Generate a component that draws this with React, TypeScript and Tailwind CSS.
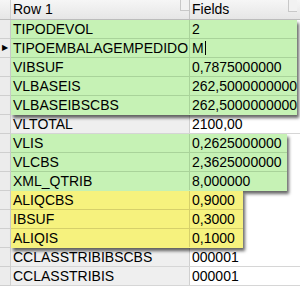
import React from 'react';

type Row = { name: string; value: string; cursor?: boolean; mark?: boolean };

const groups: { tone?: 'green' | 'yellow'; width?: string; rows: Row[] }[] = [
  {
    tone: 'green',
    width: 'w-[286px]',
    rows: [
      { name: 'TIPODEVOL', value: '2' },
      { name: 'TIPOEMBALAGEMPEDIDO', value: 'M', cursor: true, mark: true },
      { name: 'VIBSUF', value: '0,7875000000' },
      { name: 'VLBASEIS', value: '262,5000000000' },
      { name: 'VLBASEIBSCBS', value: '262,5000000000' },
    ],
  },
  { rows: [{ name: 'VLTOTAL', value: '2100,00' }] },
  {
    tone: 'green',
    width: 'w-[276px]',
    rows: [
      { name: 'VLIS', value: '0,2625000000' },
      { name: 'VLCBS', value: '2,3625000000' },
      { name: 'XML_QTRIB', value: '8,000000' },
    ],
  },
  {
    tone: 'yellow',
    width: 'w-[232px]',
    rows: [
      { name: 'ALIQCBS', value: '0,9000' },
      { name: 'IBSUF', value: '0,3000' },
      { name: 'ALIQIS', value: '0,1000' },
    ],
  },
  {
    rows: [
      { name: 'CCLASSTRIBIBSCBS', value: '000001' },
      { name: 'CCLASSTRIBIS', value: '000001' },
    ],
  },
];

function RowHeader({ mark }: { mark?: boolean }) {
  return (
    <div className="h-[19px] w-[11px] shrink-0 border-b border-r border-[#cfcfcf] bg-[#ececec] flex items-center">
      {mark && <span className="ml-[2px] text-[8px] leading-none text-black">▶</span>}
    </div>
  );
}

function Value({ row }: { row: Row }) {
  return (
    <span className="flex items-center">
      {row.value}
      {row.cursor && <span className="ml-[1px] inline-block h-[14px] w-[1px] bg-black" />}
    </span>
  );
}

export default function App() {
  return (
    <div className="w-[300px] h-[287px] overflow-hidden bg-white text-[14px] text-black [font-family:'Liberation_Sans',Arial,sans-serif]">
      {/* column header */}
      <div className="flex h-[20px] border-b border-[#bdbdbd] bg-gradient-to-b from-[#f6f6f6] to-[#e6e6e6]">
        <div className="w-[11px] shrink-0 border-r border-[#cfcfcf]" />
        <div className="relative w-[179px] shrink-0 border-r border-[#c4c4c4] pl-[2px] flex items-center">
          Row 1
          <div className="absolute right-0 top-0 h-[11px] w-[9px] border-l border-b border-[#c8c8c8] bg-[#f2f2f2]" />
        </div>
        <div className="relative flex-1 pl-[2px] flex items-center">
          Fields
          <div className="absolute right-[3px] top-0 h-[12px] w-[9px] border-l border-b border-[#c8c8c8] bg-[#f2f2f2]" />
        </div>
      </div>

      {groups.map((g, gi) => (
        <div key={gi} className="flex">
          <div className="flex flex-col">
            {g.rows.map((r) => (
              <RowHeader key={r.name} mark={r.mark} />
            ))}
          </div>
          {g.tone ? (
            <>
              <div
                className={`relative z-10 ${g.width} shrink-0 shadow-[2px_3px_3px_rgba(0,0,0,0.6)] ${
                  g.tone === 'green' ? 'bg-[#c6f2b5]' : 'bg-[#f6f27e]'
                }`}
              >
                {g.rows.map((r, i) => (
                  <div
                    key={r.name}
                    className={`flex h-[19px] ${
                      i < g.rows.length - 1
                        ? g.tone === 'green'
                          ? 'border-b border-[#a9d39a]'
                          : 'border-b border-[#d6d06a]'
                        : 'border-b border-transparent'
                    }`}
                  >
                    <div
                      className={`w-[179px] shrink-0 border-r pl-[2px] flex items-center ${
                        g.tone === 'green' ? 'border-[#a9d39a]' : 'border-[#d6d06a]'
                      }`}
                    >
                      {r.name}
                    </div>
                    <div className="flex-1 pl-[2px] flex items-center">
                      <Value row={r} />
                    </div>
                  </div>
                ))}
              </div>
              <div className="flex-1 bg-white" />
            </>
          ) : (
            <div className="flex-1">
              {g.rows.map((r) => (
                <div key={r.name} className="flex h-[19px] border-b border-[#d6d6d6]">
                  <div className="w-[179px] shrink-0 border-r border-[#d0d0d0] bg-[#efefef] pl-[2px] flex items-center">
                    {r.name}
                  </div>
                  <div className="flex-1 pl-[2px] flex items-center bg-white">
                    <Value row={r} />
                  </div>
                </div>
              ))}
            </div>
          )}
        </div>
      ))}
    </div>
  );
}
